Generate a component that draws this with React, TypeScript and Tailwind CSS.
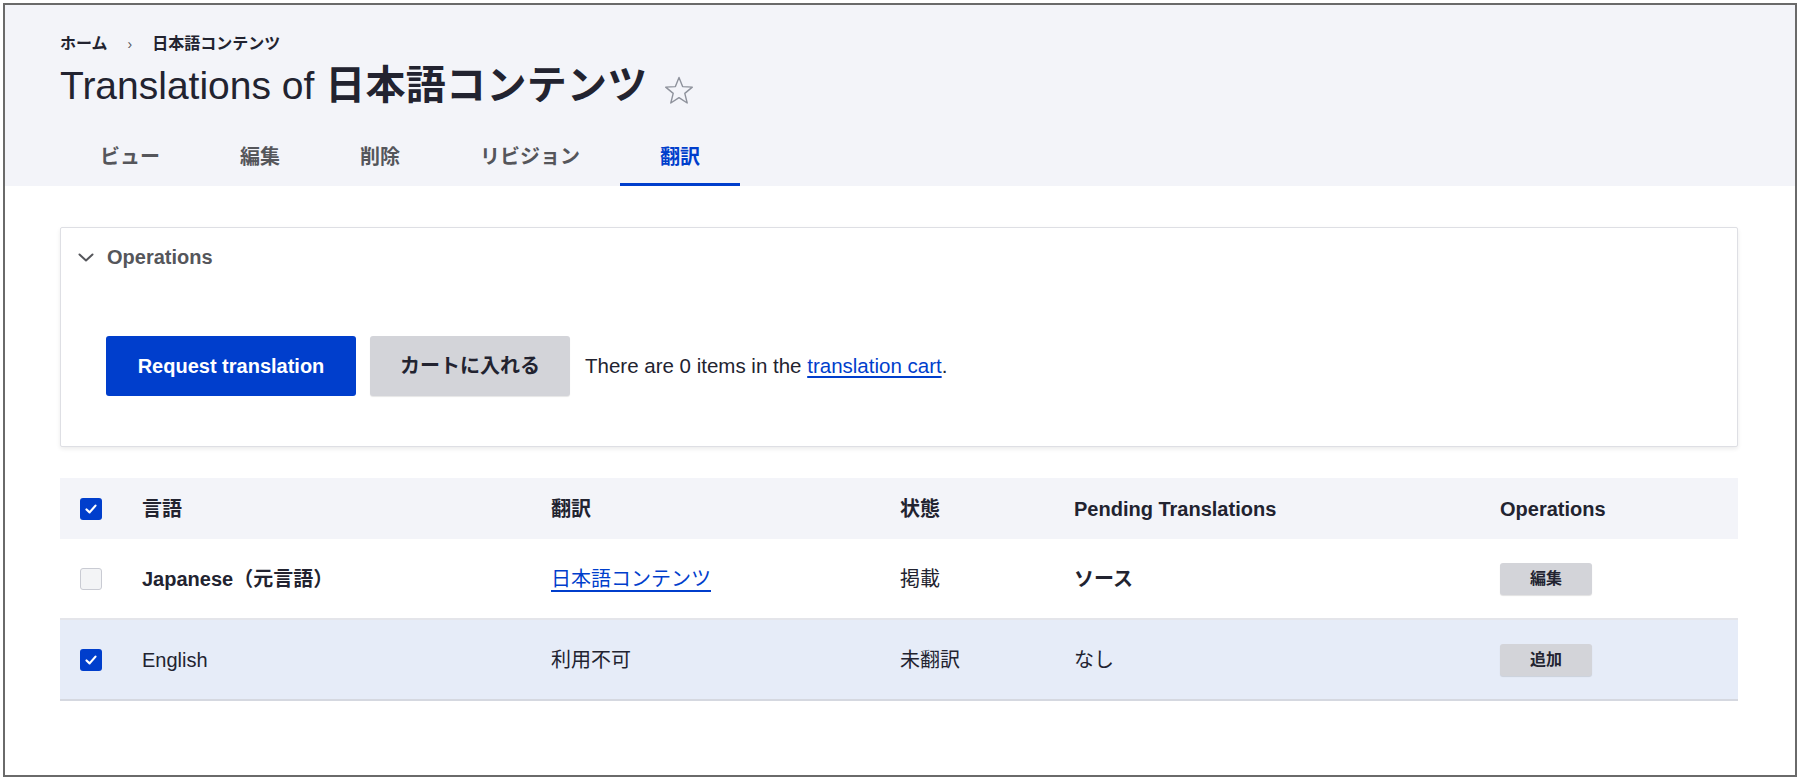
import React from "react";

const FONT = "font-['Liberation_Sans','Noto_Sans_CJK_JP',sans-serif]";

function Check({ checked }: { checked: boolean }) {
  if (checked) {
    return (
      <span className="flex h-[22px] w-[22px] items-center justify-center rounded-[3px] bg-[#003ecc]">
        <svg width="14" height="14" viewBox="0 0 14 14" fill="none">
          <path d="M2.5 7.5 L5.6 10.4 L11.5 3.6" stroke="white" strokeWidth="2.2" strokeLinecap="round" strokeLinejoin="round" />
        </svg>
      </span>
    );
  }
  return <span className="block h-[22px] w-[22px] rounded-[3px] border border-[#c9cbd3] bg-[#f3f4f6]" />;
}

function SmallButton({ label }: { label: string }) {
  return (
    <span className="flex h-[32px] w-[92px] items-center justify-center rounded-[3px] bg-[#d3d4d9] text-[16px] font-semibold text-[#222330] shadow-[0_1px_1px_rgba(0,0,0,0.12)]">
      {label}
    </span>
  );
}

export default function App() {
  const tabs = ["ビュー", "編集", "削除", "リビジョン", "翻訳"];
  const grid = "grid grid-cols-[82px_409px_349px_174px_426px_1fr] items-center";
  return (
    <div className={`h-[784px] w-[1802px] bg-white pb-[7px] pl-[3px] pr-[5px] pt-[3px] ${FONT} text-[#222330]`}>
      <div className="flex h-full flex-col border-2 border-[#6a6a6a] bg-white">
        {/* Header */}
        <header className="h-[181px] bg-[#f3f4f9] pl-[55px]">
          <div className="mt-[27px] flex h-[24px] items-center text-[16px] font-semibold">
            <span>ホーム</span>
            <span className="mx-[20px] text-[14px] font-normal text-[#55565b]">›</span>
            <span>日本語コンテンツ</span>
          </div>
          <div className="mt-[9px] flex h-[48px] items-center">
            <h1 className="leading-[48px]">
              <span className="text-[39px] font-normal">Translations of </span>
              <span className="text-[40px] font-bold tracking-[0.3px]">日本語コンテンツ</span>
            </h1>
            <svg className="ml-[16px] mt-[2px]" width="30" height="29" viewBox="0 0 30 29" fill="none">
              <path
                d="M15 1.5 L18.6 10.6 L28.3 11.1 L20.8 17.4 L23.2 27 L15 21.7 L6.8 27 L9.2 17.4 L1.7 11.1 L11.4 10.6 Z"
                stroke="#8e929c"
                strokeWidth="1.4"
                strokeLinejoin="round"
              />
            </svg>
          </div>
          <nav className="mt-[17px] flex">
            {tabs.map((t, i) => {
              const active = i === tabs.length - 1;
              return (
                <div
                  key={t}
                  className={`flex h-[56px] items-center border-b-[3px] px-[40px] text-[20px] font-semibold ${
                    active ? "border-[#003ecc] text-[#003ecc]" : "border-transparent text-[#55565b]"
                  }`}
                >
                  {t}
                </div>
              );
            })}
          </nav>
        </header>

        {/* Main */}
        <main className="pl-[55px] pr-[57px] pt-[41px]">
          <section className="h-[220px] rounded-[2px] border border-[#dedfe4] bg-white shadow-[0_2px_4px_rgba(0,0,0,0.08)]">
            <div className="flex h-[58px] items-center pl-[17px]">
              <svg width="16" height="9" viewBox="0 0 16 9" fill="none">
                <path d="M1.5 1.5 L8 7.5 L14.5 1.5" stroke="#55565b" strokeWidth="2" strokeLinecap="round" strokeLinejoin="round" />
              </svg>
              <span className="ml-[13px] text-[20px] font-bold text-[#55565b]">Operations</span>
            </div>
            <div className="mt-[50px] flex items-center pl-[45px]">
              <button className="h-[60px] w-[250px] rounded-[3px] bg-[#003ecc] text-[20px] font-bold text-white">
                Request translation
              </button>
              <button className="ml-[14px] h-[60px] w-[200px] rounded-[3px] bg-[#d3d4d9] text-[20px] font-semibold text-[#222330] shadow-[0_1px_1px_rgba(0,0,0,0.1)]">
                カートに入れる
              </button>
              <p className="ml-[15px] text-[20.5px]">
                There are 0 items in the{" "}
                <a className="text-[#003ecc] underline underline-offset-[3px]" href="#">
                  translation cart
                </a>
                .
              </p>
            </div>
          </section>

          {/* Table */}
          <div className="mt-[31px]">
            <div className={`${grid} h-[61px] bg-[#f3f4f9] text-[20px] font-bold`}>
              <div className="pl-[20px]">
                <Check checked />
              </div>
              <div>言語</div>
              <div>翻訳</div>
              <div>状態</div>
              <div>Pending Translations</div>
              <div>Operations</div>
            </div>
            <div className={`${grid} h-[81px] border-b-2 border-[#e4e5ea] bg-white text-[20px]`}>
              <div className="pl-[20px]">
                <Check checked={false} />
              </div>
              <div className="font-bold">Japanese（元言語）</div>
              <div>
                <a className="text-[#003ecc] underline underline-offset-[4px]" href="#">
                  日本語コンテンツ
                </a>
              </div>
              <div>掲載</div>
              <div className="font-bold">ソース</div>
              <div>
                <SmallButton label="編集" />
              </div>
            </div>
            <div className={`${grid} h-[81px] border-b-2 border-[#d5d8e0] bg-[#e6ecf8] text-[20px]`}>
              <div className="pl-[20px]">
                <Check checked />
              </div>
              <div>English</div>
              <div>利用不可</div>
              <div>未翻訳</div>
              <div>なし</div>
              <div>
                <SmallButton label="追加" />
              </div>
            </div>
          </div>
        </main>
      </div>
    </div>
  );
}
